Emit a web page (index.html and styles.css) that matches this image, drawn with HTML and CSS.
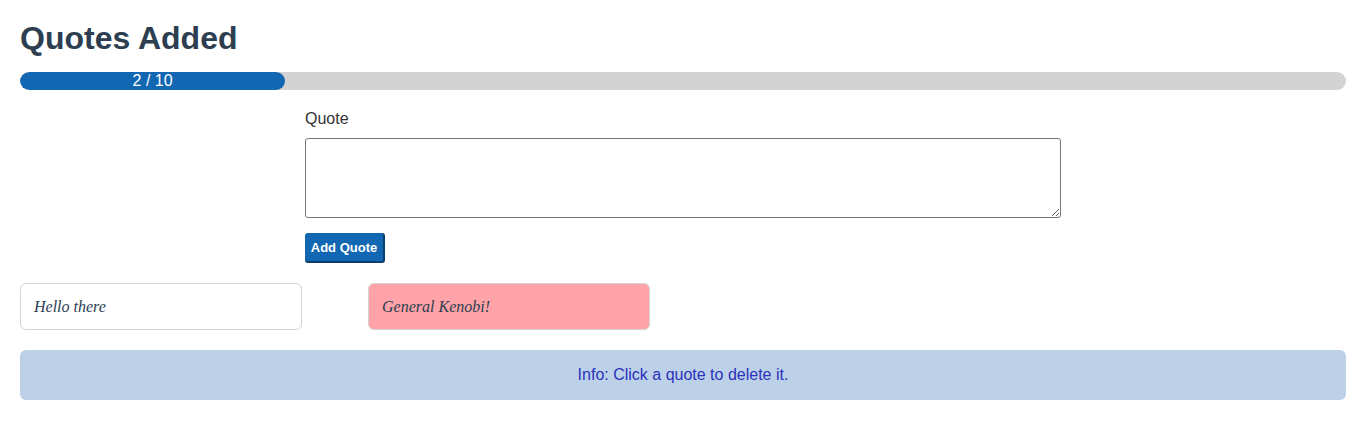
FILE: index.html
```html
<!DOCTYPE html>
<html>
<head>
<meta charset="utf-8">
<link rel="stylesheet" href="styles.css">
</head>
<body>
<div class="app">
  <h1 class="title">Quotes Added</h1>
  <div class="progress">
    <div class="progress-fill" style="width: 20%">2 / 10</div>
  </div>
  <form class="quote-form">
    <label class="form-label" for="q">Quote</label>
    <textarea id="q" class="form-input"></textarea>
    <button type="button" class="btn">Add Quote</button>
  </form>
  <div class="quotes">
    <div class="quote">Hello there</div>
    <div class="quote quote-hot">General Kenobi!</div>
  </div>
  <div class="info">Info: Click a quote to delete it.</div>
</div>
</body>
</html>
```
FILE: styles.css
```css
* { box-sizing: border-box; }
body {
  margin: 0;
  font-family: "Liberation Sans", Arial, sans-serif;
  color: #2c3e50;
  background: #fff;
}
.app {
  padding: 20px 15px 20px 20px;
}
.title {
  margin: 0;
  font-size: 32px;
  font-weight: bold;
  line-height: 36px;
  color: #2c3e50;
}
.progress {
  margin-top: 16px;
  height: 18px;
  background: #d3d3d3;
  border-radius: 9px;
  overflow: hidden;
}
.progress-fill {
  height: 18px;
  background: #1167b1;
  border-radius: 9px;
  color: #fff;
  font-size: 16px;
  line-height: 18px;
  text-align: center;
}
.quote-form {
  width: 756px;
  margin: 19px auto 0;
  display: flex;
  flex-direction: column;
  align-items: flex-start;
}
.form-label {
  font-size: 16px;
  line-height: 20px;
  color: #333;
}
.form-input {
  margin-top: 9px;
  width: 756px;
  height: 80px;
  border: 1px solid #767676;
  border-radius: 3px;
  resize: vertical;
  font-family: "Liberation Sans", Arial, sans-serif;
}
.btn {
  margin-top: 15px;
  width: 80px;
  height: 30px;
  padding: 0;
  background: #1167b1;
  color: #fff;
  font-family: "Liberation Sans", Arial, sans-serif;
  font-size: 13px;
  font-weight: bold;
  border: none;
  border-right: 2px solid #0b3f6e;
  border-bottom: 2px solid #0b3f6e;
  border-radius: 3px;
  cursor: pointer;
}
.quotes {
  margin-top: 20px;
  display: grid;
  grid-template-columns: repeat(4, 1fr);
  column-gap: 5%;
}
.quote {
  height: 47px;
  padding: 0 13px;
  display: flex;
  align-items: center;
  border: 1px solid #d3d3d3;
  border-radius: 6px;
  font-family: "Liberation Serif", "Times New Roman", serif;
  font-style: italic;
  font-size: 16px;
  color: #2c3e50;
  background: #fff;
  cursor: pointer;
}
.quote-hot {
  background: #ffa3a8;
}
.info {
  margin-top: 20px;
  height: 50px;
  display: flex;
  align-items: center;
  justify-content: center;
  background: #bcd1e8;
  border-radius: 6px;
  color: #2a31bb;
  font-size: 16px;
}
```
